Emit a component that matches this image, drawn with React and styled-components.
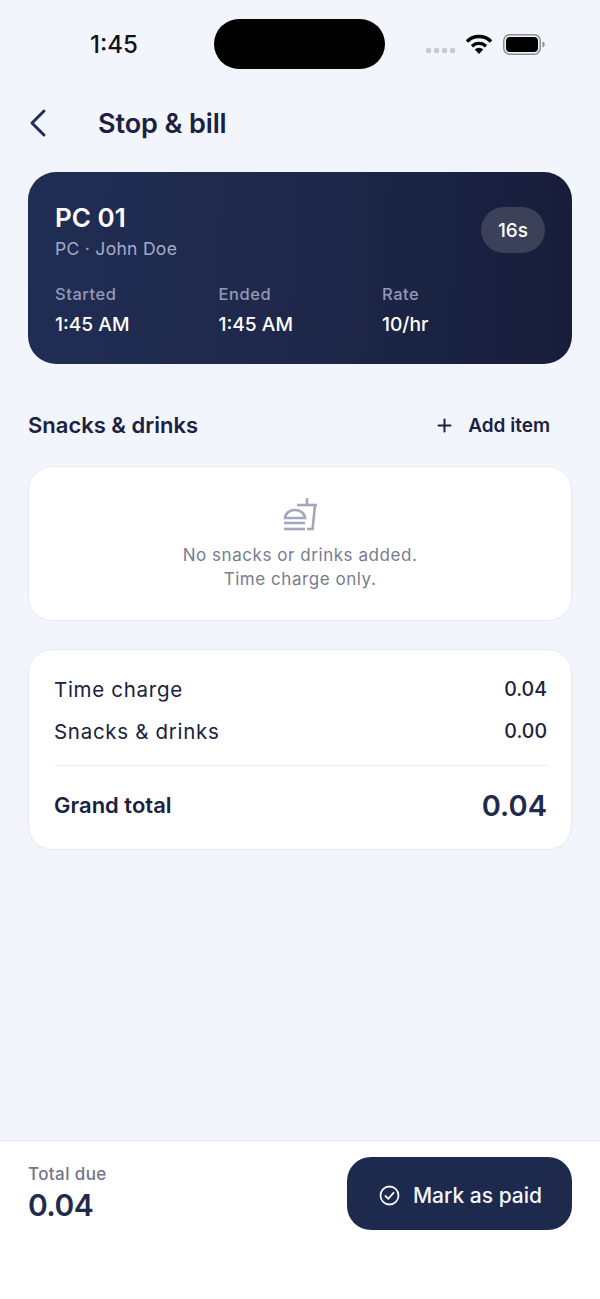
import React from 'react'
import styled, { createGlobalStyle } from 'styled-components'

const GlobalStyle = createGlobalStyle`
    html, body {
        margin: 0;
        padding: 0;
        background: #f3f5fc;
    }
    * {
        box-sizing: border-box;
    }
`

const Page = styled.div`
    width: 600px;
    height: 1299px;
    display: flex;
    flex-direction: column;
    overflow: hidden;
    background: #f3f5fc;
    color: #1b2140;
    font-family: Inter, "Liberation Sans", sans-serif;
`

const StatusBar = styled.div`
    height: 88px;
    padding-top: 19px;
    display: grid;
    grid-template-columns: 214px 171px 1fr;
    align-items: start;
`

const Clock = styled.div`
    height: 50px;
    padding: 1px 0 0 90px;
    font-size: 24px;
    line-height: 50px;
    font-weight: 500;
    color: #111318;
`

const Island = styled.div`
    height: 50px;
    border-radius: 25px;
    background: #000;
`

const StatusIcons = styled.div`
    height: 50px;
    padding-left: 41px;
    display: flex;
    align-items: center;
    gap: 10px;
`

const SignalDots = styled.div`
    display: flex;
    gap: 3px;
    margin-top: 13px;
`

const SignalDot = styled.span`
    width: 5px;
    height: 5px;
    border-radius: 1.5px;
    background: #c9cad0;
`

const Header = styled.header`
    height: 72px;
    padding: 0 28px;
    display: flex;
    align-items: center;
    margin-top: -1px;
`

const BackButton = styled.button`
    width: 70px;
    height: 40px;
    padding: 0;
    border: 0;
    background: none;
    display: flex;
    align-items: center;
`

const Title = styled.h1`
    margin: 0;
    font-size: 27px;
    font-weight: 600;
    letter-spacing: -0.1px;
    color: #1b2140;
`

const Content = styled.main`
    padding: 13px 28px 0;
    display: flex;
    flex-direction: column;
`

const SessionCard = styled.section`
    height: 192px;
    padding: 28px 27px 0;
    border-radius: 28px;
    background: linear-gradient(92deg, #202d54 0%, #1e2749 55%, #171d3a 100%);
    color: #fff;
`

const SessionTop = styled.div`
    height: 83px;
    display: flex;
    justify-content: space-between;
    align-items: flex-start;
`

const SessionName = styled.div`
    margin-top: 1px;
    font-size: 26px;
    line-height: 34px;
    font-weight: 600;
`

const SessionSub = styled.div`
    margin-top: 2px;
    font-size: 17.5px;
    line-height: 24px;
    letter-spacing: 0.3px;
    color: #a4abc4;
`

const DurationBadge = styled.div`
    width: 64px;
    height: 46px;
    margin-top: 7px;
    border-radius: 23px;
    display: flex;
    align-items: center;
    justify-content: center;
    background: #3a4159;
    font-size: 19px;
    font-weight: 500;
`

const SessionStats = styled.div`
    display: grid;
    grid-template-columns: repeat(3, 163.5px);
`

const StatLabel = styled.div`
    font-size: 16.5px;
    line-height: 22px;
    font-weight: 500;
    letter-spacing: 0.55px;
    color: #9299b4;
`

const StatValue = styled.div`
    margin-top: 7px;
    font-size: 19.2px;
    line-height: 24px;
    font-weight: 500;
`

const SectionHead = styled.div`
    height: 102px;
    padding: 20px 22px 0 0;
    display: flex;
    align-items: center;
    justify-content: space-between;
`

const SectionTitle = styled.h2`
    margin: 0;
    font-size: 22px;
    font-weight: 600;
    color: #1b2140;
`

const AddButton = styled.button`
    padding: 0;
    border: 0;
    background: none;
    display: flex;
    align-items: center;
    gap: 16px;
    font-family: inherit;
    font-size: 19px;
    font-weight: 600;
    color: #1b2140;
`

const Card = styled.section`
    border: 1px solid #e8eaf1;
    border-radius: 24px;
    background: #fff;
`

const EmptyCard = styled(Card)`
    height: 155px;
    padding-top: 31px;
    display: flex;
    flex-direction: column;
    align-items: center;
`

const EmptyText = styled.p`
    margin: 11px 0 0;
    font-size: 17px;
    line-height: 24px;
    letter-spacing: 0.55px;
    text-align: center;
    color: #777c90;
`

const SummaryCard = styled(Card)`
    height: 201px;
    margin-top: 28px;
    padding: 18px 24px 0 25px;
`

const SummaryRow = styled.div`
    height: 42px;
    display: flex;
    align-items: center;
    justify-content: space-between;
    font-size: 20.5px;
    letter-spacing: 0.7px;
    color: #1b2140;
`

const SummaryAmount = styled.span`
    font-size: 19.5px;
    font-weight: 500;
    letter-spacing: 0;
`

const TotalRow = styled.div`
    height: 79px;
    margin-top: 13px;
    border-top: 1px solid #eceef3;
    display: flex;
    align-items: center;
    justify-content: space-between;
`

const TotalLabel = styled.span`
    font-size: 22px;
    font-weight: 600;
    color: #1b2140;
`

const TotalAmount = styled.span`
    font-size: 29px;
    font-weight: 600;
    color: #1f2a4d;
`

const Footer = styled.footer`
    margin-top: auto;
    height: 159px;
    padding: 16px 28px 0;
    display: flex;
    justify-content: space-between;
    align-items: flex-start;
    border-top: 1px solid #e9ebf1;
    background: #fff;
`

const DueBlock = styled.div`
    padding-top: 6px;
`

const DueLabel = styled.div`
    font-size: 17px;
    line-height: 22px;
    font-weight: 500;
    letter-spacing: 0.4px;
    color: #72768b;
`

const DueAmount = styled.div`
    margin-top: 1px;
    font-size: 30px;
    line-height: 38px;
    font-weight: 600;
    letter-spacing: -0.6px;
    color: #1f2a4d;
`

const PayButton = styled.button`
    width: 225px;
    height: 73px;
    padding: 3px 0 0 2px;
    border: 0;
    border-radius: 24px;
    display: flex;
    align-items: center;
    justify-content: center;
    gap: 13px;
    background: #1d2a4e;
    color: #f4f5fa;
    font-family: inherit;
    font-size: 21px;
    font-weight: 500;
`

function WifiIcon() {
    return (
        <svg width="28" height="22" viewBox="0 0 28 22" fill="none" stroke="#000" strokeWidth="3.4">
            <path d="M2 8.5a17 17 0 0 1 24 0" />
            <path d="M7 13.2a10 10 0 0 1 14 0" />
            <path d="M14 21l-4.2-4.6a6 6 0 0 1 8.4 0z" fill="#000" stroke="none" />
        </svg>
    )
}

function BatteryIcon() {
    return (
        <svg width="42" height="21" viewBox="0 0 42 21" fill="none">
            <rect x="0.75" y="0.75" width="36.5" height="19.5" rx="6" stroke="#8c8d91" strokeWidth="1.5" />
            <rect x="3" y="3" width="32" height="15" rx="4" fill="#000" />
            <path d="M39.5 7.5c1.4.4 2.2 1.6 2.2 3s-.8 2.6-2.2 3z" fill="#8c8d91" />
        </svg>
    )
}

function BackIcon() {
    return (
        <svg width="20" height="30" viewBox="0 0 20 30" fill="none" stroke="#252e54" strokeWidth="3" strokeLinecap="round" strokeLinejoin="round">
            <path d="M16 3 4 15l12 12" />
        </svg>
    )
}

function PlusIcon() {
    return (
        <svg width="15" height="15" viewBox="0 0 15 15" fill="none" stroke="#1b2140" strokeWidth="2" strokeLinecap="round">
            <path d="M7.500 1.500v12M1.500 7.500h12" />
        </svg>
    )
}

function FastfoodIcon() {
    return (
        <svg width="34" height="34" viewBox="0 0 34 34" fill="none" stroke="#a5a8bc" strokeWidth="2.6">
            <path d="M24 0v7" />
            <path d="M14 7h20" />
            <path d="M32 7l-2.400 24H24" />
            <path d="M2 20c.4-5 4.800-8 10-8s9.600 3 10 8z" />
            <path d="M1 25h21" />
            <path d="M1 31h21" />
        </svg>
    )
}

function CheckCircleIcon() {
    return (
        <svg width="21" height="21" viewBox="0 0 21 21" fill="none" stroke="#f4f5fa" strokeWidth="1.8" strokeLinecap="round" strokeLinejoin="round">
            <circle cx="10.500" cy="10.500" r="9" />
            <path d="M6.500 11l2.800 2.800 5.200-6" />
        </svg>
    )
}

const stats = [
    { label: 'Started', value: '1:45 AM' },
    { label: 'Ended', value: '1:45 AM' },
    { label: 'Rate', value: '10/hr' },
]

export default function App() {
    return (
        <Page>
            <GlobalStyle />
            <StatusBar>
                <Clock>1:45</Clock>
                <Island />
                <StatusIcons>
                    <SignalDots>
                        <SignalDot />
                        <SignalDot />
                        <SignalDot />
                        <SignalDot />
                    </SignalDots>
                    <WifiIcon />
                    <BatteryIcon />
                </StatusIcons>
            </StatusBar>
            <Header>
                <BackButton aria-label="Back"><BackIcon /></BackButton>
                <Title>Stop &amp; bill</Title>
            </Header>
            <Content>
                <SessionCard>
                    <SessionTop>
                        <div>
                            <SessionName>PC 01</SessionName>
                            <SessionSub>PC · John Doe</SessionSub>
                        </div>
                        <DurationBadge>16s</DurationBadge>
                    </SessionTop>
                    <SessionStats>
                        {stats.map(stat => (
                            <div key={stat.label}>
                                <StatLabel>{stat.label}</StatLabel>
                                <StatValue>{stat.value}</StatValue>
                            </div>
                        ))}
                    </SessionStats>
                </SessionCard>
                <SectionHead>
                    <SectionTitle>Snacks &amp; drinks</SectionTitle>
                    <AddButton><PlusIcon />Add item</AddButton>
                </SectionHead>
                <EmptyCard>
                    <FastfoodIcon />
                    <EmptyText>No snacks or drinks added.<br />Time charge only.</EmptyText>
                </EmptyCard>
                <SummaryCard>
                    <SummaryRow>Time charge<SummaryAmount>0.04</SummaryAmount></SummaryRow>
                    <SummaryRow>Snacks &amp; drinks<SummaryAmount>0.00</SummaryAmount></SummaryRow>
                    <TotalRow>
                        <TotalLabel>Grand total</TotalLabel>
                        <TotalAmount>0.04</TotalAmount>
                    </TotalRow>
                </SummaryCard>
            </Content>
            <Footer>
                <DueBlock>
                    <DueLabel>Total due</DueLabel>
                    <DueAmount>0.04</DueAmount>
                </DueBlock>
                <PayButton><CheckCircleIcon />Mark as paid</PayButton>
            </Footer>
        </Page>
    )
}
